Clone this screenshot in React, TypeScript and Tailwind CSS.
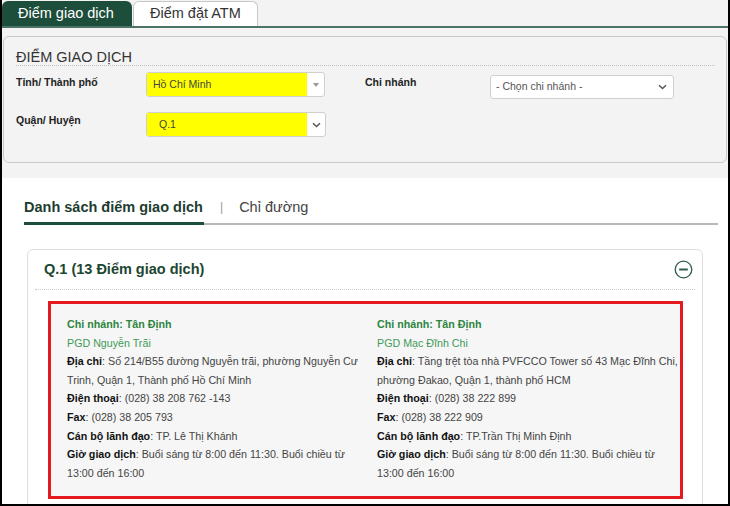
import React from "react";

const FONT = { fontFamily: '"Liberation Sans", Arial, sans-serif' };

function Chevron() {
  return (
    <svg width="9" height="6" viewBox="0 0 9 6" className="shrink-0">
      <path d="M1 1.2 L4.5 4.6 L8 1.2" fill="none" stroke="#555" strokeWidth="1.4" />
    </svg>
  );
}

function Caret() {
  return (
    <svg width="6" height="4" viewBox="0 0 6 4" className="shrink-0">
      <path d="M0 0 L6 0 L3 4 Z" fill="#999" />
    </svg>
  );
}

function MinusCircle() {
  return (
    <svg width="19" height="19" viewBox="0 0 19 19">
      <circle cx="9.5" cy="9.5" r="8.3" fill="none" stroke="#2f5d4c" strokeWidth="1.3" />
      <path d="M5.2 9.5 H13.8" stroke="#2f5d4c" strokeWidth="2" />
    </svg>
  );
}

interface Branch {
  branch: string;
  name: string;
  address: string;
  phone: string;
  fax: string;
  head: string;
  hours: string;
}

const BRANCHES: Branch[] = [
  {
    branch: "Chi nhánh: Tân Định",
    name: "PGD Nguyễn Trãi",
    address: "Số 214/B55 đường Nguyễn trãi, phường Nguyễn Cư Trinh, Quận 1, Thành phố Hồ Chí Minh",
    phone: "(028) 38 208 762 -143",
    fax: "(028) 38 205 793",
    head: "TP. Lê Thị Khánh",
    hours: "Buổi sáng từ 8:00 đến 11:30. Buổi chiều từ 13:00 đến 16:00",
  },
  {
    branch: "Chi nhánh: Tân Định",
    name: "PGD Mạc Đĩnh Chi",
    address: "Tầng trệt tòa nhà PVFCCO Tower số 43 Mạc Đĩnh Chi, phường Đakao, Quận 1, thành phố HCM",
    phone: "(028) 38 222 899",
    fax: "(028) 38 222 909",
    head: "TP.Trần Thị Minh Định",
    hours: "Buổi sáng từ 8:00 đến 11:30. Buổi chiều từ 13:00 đến 16:00",
  },
];

function Field({ label, value }: { label: string; value: string }) {
  return (
    <p>
      <b className="text-[#111]">{label}</b>: {value}
    </p>
  );
}

function BranchInfo({ b }: { b: Branch }) {
  return (
    <div className="text-[10.7px] leading-[18.6px] text-[#444]">
      <p className="font-bold text-[#2e8540]">{b.branch}</p>
      <p className="text-[#3f9a58]">{b.name}</p>
      <Field label="Địa chỉ" value={b.address} />
      <Field label="Điện thoại" value={b.phone} />
      <Field label="Fax" value={b.fax} />
      <Field label="Cán bộ lãnh đạo" value={b.head} />
      <Field label="Giờ giao dịch" value={b.hours} />
    </div>
  );
}

export default function App() {
  return (
    <div
      className="w-[730px] h-[506px] overflow-hidden bg-white border-x-2 border-b-2 border-black"
      style={FONT}
    >
      <div className="h-[178px] bg-[#f3f3f3] pt-px">
        {/* top tabs */}
        <div className="flex h-[27px] border-b-2 border-[#4d7366]">
          <div className="w-[130px] h-[25px] rounded-t-[6px] bg-[#1d4d3b] text-white text-[14.5px] flex items-center pl-4">
            Điểm giao dịch
          </div>
          <div className="w-[125px] h-[25px] ml-px rounded-t-[6px] bg-white border border-b-0 border-[#c8c8c8] text-[#333] text-[14.5px] flex items-center pl-4">
            Điểm đặt ATM
          </div>
        </div>

        {/* filter panel */}
        <div className="mx-px mt-[8px] h-[127px] rounded-[6px] border border-[#c9c9c9] bg-[#f3f3f3] pl-[12px] pr-[11px]">
          <div className="pt-[13px] h-[29px] border-b border-dotted border-[#c4c4c4] text-[14.5px] leading-[15px] text-[#333]">
            ĐIỂM GIAO DỊCH
          </div>

          <div className="flex mt-[6px]">
            <div className="w-[130px] pt-[3px] text-[10.5px] font-bold text-[#222]">Tỉnh/ Thành phố</div>
            <div className="w-[179px] h-[25px] flex bg-white border border-[#cfcfcf] rounded-[3px]">
              <div className="flex-1 bg-[#ffff00] pl-[6px] flex items-center text-[10.5px] text-[#444]">Hồ Chí Minh</div>
              <div className="w-[17px] flex items-center justify-center">
                <Caret />
              </div>
            </div>
            <div className="w-[125px] ml-[40px] pt-[3px] text-[10.5px] font-bold text-[#222]">Chi nhánh</div>
            <div className="w-[184px] h-[24px] mt-[3px] flex items-center justify-between bg-white border border-[#cfcfcf] rounded-[3px] pl-[5px] pr-[6px] text-[10.5px] text-[#555]">
              - Chọn chi nhánh -
              <Chevron />
            </div>
          </div>

          <div className="flex mt-[13px]">
            <div className="w-[130px] pt-px text-[10.5px] font-bold text-[#222]">Quận/ Huyện</div>
            <div className="w-[180px] h-[25px] flex bg-white border border-[#cfcfcf] rounded-[3px]">
              <div className="flex-1 bg-[#ffff00] pl-[12px] flex items-center text-[10.5px] text-[#444]">Q.1</div>
              <div className="w-[18px] flex items-center justify-center">
                <Chevron />
              </div>
            </div>
          </div>
        </div>
      </div>

      {/* list tabs */}
      <div className="ml-[22px] w-[694px] mt-[21px] flex items-end border-b-2 border-[#b8b8b8] text-[14.5px] leading-[17px]">
        <div className="pb-[6px] -mb-[2px] border-b-[3px] border-[#1d4d3b] font-bold text-[#1d3d30] w-[180px]">
          Danh sách điểm giao dịch
        </div>
        <div className="pb-[7px] pl-[16px] text-[#999] text-[12px]">|</div>
        <div className="pb-[7px] pl-[16px] text-[#444]">Chỉ đường</div>
      </div>

      {/* card */}
      <div className="ml-[25px] mt-[24px] w-[676px] h-[300px] rounded-t-[6px] border border-[#dedede]">
        <div className="mx-[7px] h-[40px] pl-[9px] pr-[2px] flex items-center justify-between border-b border-dotted border-[#c8c8c8]">
          <span className="text-[14.5px] font-bold text-[#1d4632] pt-px">Q.1 (13 Điểm giao dịch)</span>
          <MinusCircle />
        </div>
        <div className="ml-[20px] mt-[11px] w-[635px] border-[3px] border-[#e3191f] bg-[#f6f6f6] pl-[16px] pt-[11px] pb-[14px] grid grid-cols-[310px_303px]">
          <div className="pr-[10px]">
            <BranchInfo b={BRANCHES[0]} />
          </div>
          <BranchInfo b={BRANCHES[1]} />
        </div>
      </div>
    </div>
  );
}
